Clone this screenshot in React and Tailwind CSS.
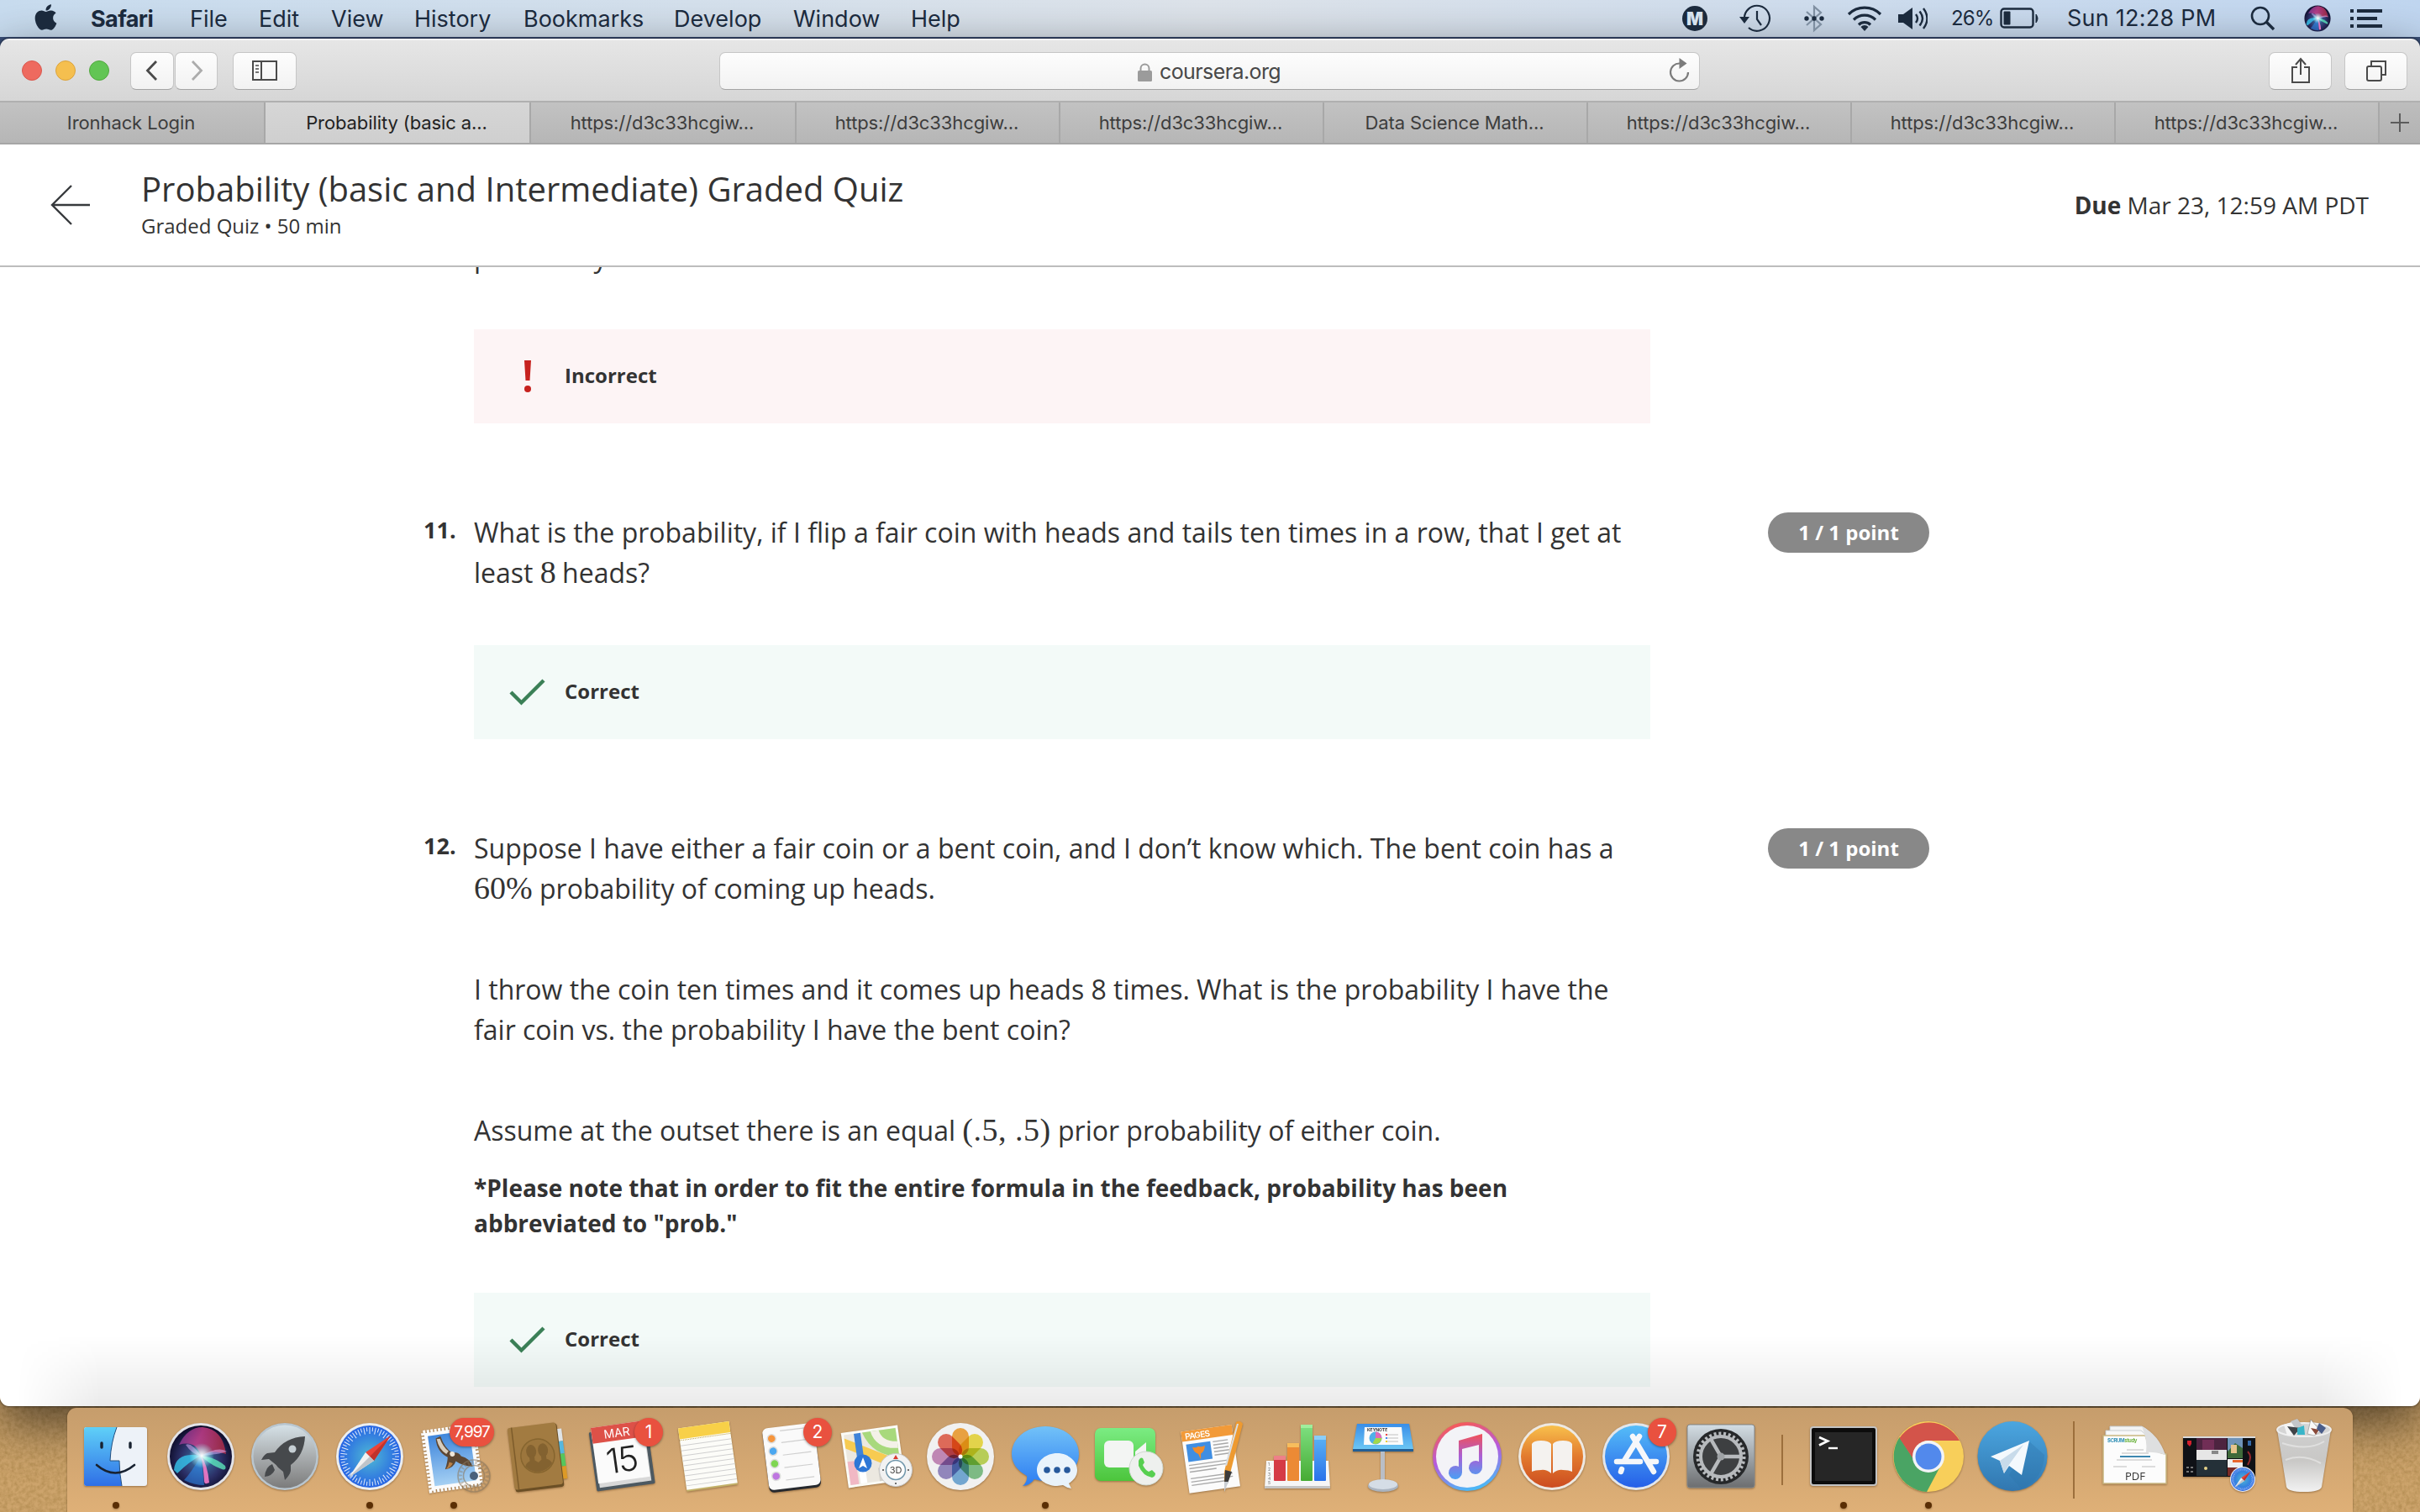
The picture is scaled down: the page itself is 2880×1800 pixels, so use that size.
import React from "react";
import { FaApple } from "react-icons/fa";

const INK = "#1b2a3d";

/* ---------- Menu bar ---------- */

const menus = [
  ["Safari", "w-[118px] font-bold tracking-[-0.6px]"],
  ["File", "w-[82px]"],
  ["Edit", "w-[86px]"],
  ["View", "w-[99px]"],
  ["History", "w-[130px]"],
  ["Bookmarks", "w-[179px]"],
  ["Develop", "w-[142px]"],
  ["Window", "w-[140px]"],
  ["Help", "w-[80px]"],
];

function MenuBar() {
  return (
    <div className="flex h-[44px] items-center bg-gradient-to-r from-[#c8dcef] via-[#dde3ea] to-[#c0d6f0] font-['Inter',sans-serif] text-[27px] text-[#1b2a3d]">
      <div className="w-[108px] pl-[37px] pb-[4px]">
        <FaApple size={35} />
      </div>
      {menus.map(([label, cls]) => (
        <div key={label} className={`whitespace-nowrap pt-px leading-[44px] ${cls}`}>
          {label}
        </div>
      ))}
      <div className="ml-auto flex h-[44px] items-center pr-[45px]">
        <div className="mr-[37px] flex size-[30px] items-center justify-center rounded-full bg-[#1b2a3d] text-[21px] font-black leading-none text-[#d5e1ee]">
          M
        </div>
        <svg className="mr-[38px]" width="40" height="34" viewBox="0 0 40 34" fill="none" stroke={INK} strokeWidth="2.2">
          <path d="M7 18A15 15 0 1 1 12 28" />
          <path d="M22 8v10l5 7" />
          <path d="M1 15h12l-6 8z" fill={INK} stroke="none" />
        </svg>
        <svg className="mr-[27px]" width="24" height="34" viewBox="0 0 24 34" fill="none" stroke="#7f8fa1" strokeWidth="2.2">
          <path d="M3 9l17 15-8 7V3l8 7L3 25" />
          <g fill={INK} stroke="none">
            <circle cx="3" cy="17" r="2.7" />
            <circle cx="12" cy="17" r="2.7" />
            <circle cx="21" cy="17" r="2.7" />
          </g>
        </svg>
        <svg className="mr-[19px]" width="42" height="32" viewBox="0 0 42 32" fill="none" stroke={INK} strokeWidth="3.2">
          <path d="M2 11a27 27 0 0 1 38 0" />
          <path d="M8 17.5a18.500 18.500 0 0 1 26 0" />
          <path d="M14 23.500a10 10 0 0 1 14 0" />
          <path d="M21 31l-4.500-5a6 6 0 0 1 9 0z" fill={INK} stroke="none" />
        </svg>
        <svg className="mr-[28px]" width="35" height="28" viewBox="0 0 35 28" fill="none" stroke={INK} strokeWidth="2.400">
          <path d="M0 9h6l11-8v26L6 19H0z" fill={INK} stroke="none" />
          <path d="M21 9q4 5 0 10M25.500 5.500q7 8.500 0 17M30 2q9 12 0 24" />
        </svg>
        <div className="w-[58px] text-[24px] tracking-[-0.9px]">26%</div>
        <svg className="mr-[33px]" width="47" height="26" viewBox="0 0 47 26" fill="none" stroke={INK} strokeWidth="2.400">
          <rect x="1.500" y="1.500" width="38" height="22" rx="3.500" />
          <path d="M43 8q4 5 0 10z" fill={INK} strokeWidth="1" />
          <rect x="4.500" y="4.500" width="8" height="16" rx="1" fill={INK} stroke="none" />
        </svg>
        <div className="w-[218px] whitespace-nowrap pt-px tracking-[0.25px]">Sun 12:28 PM</div>
        <svg className="mr-[33px]" width="31" height="30" viewBox="0 0 31 30" fill="none" stroke={INK} strokeWidth="2.600">
          <circle cx="12" cy="12" r="10" />
          <path d="M19 19l9 9" strokeWidth="3.400" />
        </svg>
        <svg className="mr-[23px]" width="32" height="32" viewBox="2 2 76 76">
          <SiriOrb />
        </svg>
        <svg width="38" height="22" viewBox="0 0 38 22" fill={INK}>
          <path d="M0 0h4v4H0zM8 0h30v4H8zM0 9h4v4H0zM8 9h24v4H8zM0 18h4v4H0zM8 18h30v4H8z" />
        </svg>
      </div>
    </div>
  );
}

/* ---------- Safari chrome ---------- */

function ToolButton({ className, children }) {
  return (
    <div
      className={`flex h-[45px] items-center justify-center rounded-[7px] border border-[#c6c6c6] border-b-[#a4a4a4] bg-gradient-to-b from-[#fdfdfd] to-[#f2f2f2] ${className}`}
    >
      {children}
    </div>
  );
}

function Toolbar() {
  return (
    <div className="flex h-[74px] items-center border-t-2 border-[#f4f4f4] bg-gradient-to-b from-[#e6e6e6] to-[#d6d6d6] pl-[26px] pr-[15px]">
      <div className="flex gap-[16px]">
        <div className="size-[24px] rounded-full border border-[#d9584e] bg-[#ee6a5f]" />
        <div className="size-[24px] rounded-full border border-[#dba33c] bg-[#f5bf4f]" />
        <div className="size-[24px] rounded-full border border-[#52a83f] bg-[#62c554]" />
      </div>
      <ToolButton className="ml-[25px] w-[52px]">
        <svg width="16" height="26" viewBox="0 0 16 26" fill="none" stroke="#4a4a4a" strokeWidth="2.800">
          <path d="M13 2L2.500 13 13 24" />
        </svg>
      </ToolButton>
      <ToolButton className="ml-px w-[51px]">
        <svg width="16" height="26" viewBox="0 0 16 26" fill="none" stroke="#acacac" strokeWidth="2.800">
          <path d="M3 2l10.500 11L3 24" />
        </svg>
      </ToolButton>
      <ToolButton className="ml-[18px] w-[76px]">
        <svg width="30" height="24" viewBox="0 0 30 24" fill="none" stroke="#4a4a4a" strokeWidth="2">
          <rect x="1" y="1" width="28" height="22" />
          <path d="M11 1v22" />
          <path d="M4 6h4M4 10h4M4 14h4" strokeWidth="1.600" />
        </svg>
      </ToolButton>
      <div className="ml-[503px] flex h-[45px] w-[1167px] items-center rounded-[7px] border border-[#c6c6c6] border-b-[#a4a4a4] bg-gradient-to-b from-[#fdfdfd] to-[#f2f2f2] pl-[497px] pr-[10px]">
        <svg className="mt-[3px]" width="17" height="22" viewBox="0 0 17 22">
          <rect y="9" width="17" height="13" rx="1.500" fill="#9b9b9b" />
          <path d="M3.500 10V6.500a5 5 0 0 1 10 0V10" fill="none" stroke="#9b9b9b" strokeWidth="2" />
        </svg>
        <span className="ml-[9px] mt-[4px] font-['Inter',sans-serif] text-[25px] tracking-[-0.6px] text-[#484848]">coursera.org</span>
        <svg className="ml-auto" width="28" height="30" viewBox="0 0 28 30" fill="none" stroke="#7b7b7b" strokeWidth="2.200">
          <path d="M15 6.500A10.500 10.500 0 1 0 25 17" />
          <path d="M14.500 0l9 6.500-9 6.500z" fill="#7b7b7b" stroke="none" />
        </svg>
      </div>
      <ToolButton className="ml-auto w-[75px]">
        <svg width="24" height="32" viewBox="0 0 24 32" fill="none" stroke="#4a4a4a" strokeWidth="2">
          <path d="M8 12H2v18h20V12h-6" />
          <path d="M12 21V3M6 9l6-7 6 7" />
        </svg>
      </ToolButton>
      <ToolButton className="ml-[15px] w-[75px]">
        <svg width="26" height="26" viewBox="0 0 26 26" fill="none" stroke="#4a4a4a" strokeWidth="2">
          <rect x="2" y="8" width="17" height="17" rx="2" />
          <path d="M7 7.500V2h17v16h-5" />
        </svg>
      </ToolButton>
    </div>
  );
}

const D3 = "https://d3c33hcgiw...";
const tabs = [
  ["Ironhack Login", "w-[316px]"],
  ["Probability (basic a...", "w-[316px]"],
  [D3, "w-[316px]"],
  [D3, "w-[314px]"],
  [D3, "w-[314px]"],
  ["Data Science Math...", "w-[314px]"],
  [D3, "w-[314px]"],
  [D3, "w-[314px]"],
  [D3, "w-[314px]"],
];

function TabBar() {
  return (
    <div className="flex h-[52px] border-b-2 border-t-2 border-[#a6a6a6] border-t-[#b0b0b0] font-['Inter',sans-serif] text-[22px]">
      {tabs.map(([label, cls], i) => (
        <div
          key={i}
          className={`flex shrink-0 items-center justify-center whitespace-nowrap border-r-2 border-[#a8a8a8] pr-[2px] tracking-[-0.1px] ${cls} ${
            i === 1
              ? "bg-gradient-to-b from-[#d6d6d6] to-[#cfcfcf] text-[#222]"
              : "bg-gradient-to-b from-[#c2c2c2] to-[#b6b6b6] text-[#3d3d3d]"
          }`}
        >
          {label}
        </div>
      ))}
      <div className="flex flex-1 items-center justify-center bg-gradient-to-b from-[#bdbdbd] to-[#b2b2b2]">
        <svg width="22" height="22" viewBox="0 0 22 22" stroke="#5c5c5c" strokeWidth="2">
          <path d="M11 0v22M0 11h22" />
        </svg>
      </div>
    </div>
  );
}

/* ---------- Quiz page ---------- */

function QuizHeader() {
  return (
    <div className="flex h-[146px] items-center border-b-2 border-[#bdbdbd] bg-white pl-[60px] pr-[61px] text-[#333]">
      <svg width="48" height="48" viewBox="0 0 48 48" fill="none" stroke="#373a3d" strokeWidth="2.400">
        <path d="M25 1L2 24l23 23M2 24h45" />
      </svg>
      <div className="-mt-px ml-[60px]">
        <div className="text-[40px] leading-[48px]">Probability (basic and Intermediate) Graded Quiz</div>
        <div className="mt-[2px] text-[24px] leading-[36px]">Graded Quiz • 50 min</div>
      </div>
      <div className="-mt-px ml-auto text-[28px]">
        <b>Due</b> Mar 23, 12:59 AM PDT
      </div>
    </div>
  );
}

function Feedback({ ok }) {
  return (
    <div className={`flex h-[112px] w-[1400px] items-center pl-[40px] ${ok ? "bg-[#f3faf8]" : "bg-[#fdf4f5]"}`}>
      <div className="flex w-[68px] pl-[2px]">
        {ok ? (
          <svg width="44" height="34" viewBox="0 0 44 34" fill="none" stroke="#3b8057" strokeWidth="4.400">
            <path d="M2 17l12.500 12.500L41 3" />
          </svg>
        ) : (
          <svg className="ml-[17px]" width="10" height="40" viewBox="0 0 10 40" fill="#c7221f">
            <path d="M1 1h8L7.500 25h-5z" />
            <circle cx="5" cy="35" r="4" />
          </svg>
        )}
      </div>
      <b className="-mt-[2px] text-[24px] leading-[36px]">{ok ? "Correct" : "Incorrect"}</b>
    </div>
  );
}

function Question({ number, children }) {
  return (
    <div className="mt-[104px] flex">
      <div className="w-[60px] pt-[2px] text-[27px] font-bold leading-[42px]">{number}.</div>
      <div className="w-[1400px] pt-[2px]">
        {children}
        <div className="h-[62px]" />
        <Feedback ok />
      </div>
      <div className="ml-[140px] mt-[2px] flex h-[48px] w-[192px] items-center justify-center rounded-full bg-[#888] pb-px text-[24px] font-bold text-white">
        1 / 1 point
      </div>
    </div>
  );
}

function MathText({ className = "", children }) {
  return <span className={`font-['Liberation_Serif',serif] text-[38px] leading-none ${className}`}>{children}</span>;
}

function QuizBody() {
  return (
    <div className="relative h-[1356px] overflow-hidden bg-white pl-[504px] text-[32px] leading-[48px] text-[#333]">
      <div className="-mt-[36px] ml-[60px] h-[48px] tracking-[-0.2px]">probability that is chosen.</div>
      <div className="ml-[60px] mt-[62px]">
        <Feedback />
      </div>
      <Question number="11">
        <p className="h-[96px]">
          What is the probability, if I flip a fair coin with heads and tails ten times in a row, that I get at
          <br />
          least <MathText className="tracking-[-1px]">8</MathText> heads?
        </p>
      </Question>
      <Question number="12">
        <p className="h-[96px]">
          Suppose I have either a fair coin or a bent coin, and I don’t know which. The bent coin has a
          <br />
          <MathText>60%</MathText> probability of coming up heads.
        </p>
        <p className="mt-[72px] h-[96px]">
          I throw the coin ten times and it comes up heads 8 times. What is the probability I have the
          <br />
          fair coin vs. the probability I have the bent coin?
        </p>
        <p className="mt-[72px] h-[48px]">
          Assume at the outset there is an equal <MathText className="tracking-[0.500px]">(.5, .5)</MathText> prior probability of either coin.
        </p>
        <p className="mt-[23px] text-[28px] font-bold leading-[42px]">
          *Please note that in order to fit the entire formula in the feedback, probability has been
          <br />
          abbreviated to "prob."
        </p>
      </Question>
      <div className="absolute bottom-0 left-[20px] right-[20px] h-[84px] bg-gradient-to-b from-transparent to-black/8 [mask-image:linear-gradient(to_right,transparent,black_100px,black_calc(100%-100px),transparent)]" />
    </div>
  );
}

/* ---------- Dock icons, each on a 100 x 124 cell centred at (50, 58) ---------- */

function SiriOrb() {
  return (
    <g>
      <defs>
        <radialGradient id="siriBase" cx=".5" cy=".55" r=".55">
          <stop offset="0" stopColor="#3d7fb0" />
          <stop offset=".6" stopColor="#2b2f66" />
          <stop offset="1" stopColor="#0c0a26" />
        </radialGradient>
        <linearGradient id="siriTop" x2="1" y2=".3">
          <stop offset="0" stopColor="#7a3ba0" />
          <stop offset=".5" stopColor="#d8408f" />
          <stop offset="1" stopColor="#c02f4a" />
        </linearGradient>
        <radialGradient id="siriGlow">
          <stop offset="0" stopColor="#fff" />
          <stop offset=".35" stopColor="#dff" stopOpacity=".7" />
          <stop offset="1" stopColor="#8ff" stopOpacity="0" />
        </radialGradient>
      </defs>
      <circle cx="40" cy="40" r="37" fill="url(#siriBase)" />
      <path d="M14 26Q24 5 42 5q24 2 28 32-14-6-30 2Q34 20 14 26z" fill="url(#siriTop)" opacity=".75" />
      <path d="M8 56Q10 34 40 39 26 46 12 60z" fill="#36c5ee" opacity=".8" />
      <path d="M40 39q18 2 29 12 2 6-4 4-14-5-25-16z" fill="#5ff0c0" opacity=".75" />
      <path d="M40 39q8 10 10 32-6 3-6-2-1-18-4-30z" fill="#f47ac8" opacity=".9" />
      <path d="M40 39Q28 60 20 68q12 6 24 6-2-20-4-35z" fill="#2d8df0" opacity=".55" />
      <path d="M40 39Q28 22 22 26q8 12 18 13zM40 39q22-12 31-5-12 4-31 5z" fill="#e6b4ff" opacity=".5" />
      <circle cx="41" cy="39" r="15" fill="url(#siriGlow)" />
    </g>
  );
}

function Compass({ cx = 50, cy = 58, r = 40 }) {
  const ticks = Array.from({ length: 60 }, (_, i) => i * 6);
  return (
    <g transform={`translate(${cx} ${cy}) scale(${r / 40})`}>
      <circle r="40" fill="#eceef0" />
      <circle r="37" fill="url(#compassFill)" />
      <g stroke="#fff" strokeWidth="1" opacity=".85">
        {ticks.map((a) => (
          <path key={a} d={a % 12 ? "M0-35v5" : "M0-35v8"} transform={`rotate(${a})`} />
        ))}
      </g>
      <path d="M25-25L5 5-5-5z" fill="#ea4438" />
      <path d="M25-25L5 5 0 0z" fill="#c0332b" />
      <path d="M-25 25L5 5-5-5z" fill="#f2f2f2" />
      <path d="M-25 25L5 5 0 0z" fill="#bfc4c9" />
    </g>
  );
}

const Finder = () => (
  <g>
    <rect x="12" y="23" width="75" height="70" rx="3" fill="#edf2f8" />
    <path d="M15 23h36q-7 18-8 40h11q0 14 3 30H15q-3 0-3-3V26q0-3 3-3z" fill="url(#finderBlue)" />
    <path d="M51 23q-7 18-8 40h11q0 14 3 30" fill="none" stroke="#23507f" strokeWidth="1" />
    <path d="M33 42v5M67 42v5" stroke="#182230" strokeWidth="3.400" strokeLinecap="round" />
    <path d="M27 68q22 19 45 0" stroke="#182230" strokeWidth="2.600" fill="none" strokeLinecap="round" />
  </g>
);

const Siri = () => (
  <g>
    <circle cx="50" cy="58" r="40" fill="#e4e4e8" />
    <g transform="translate(10 18)">
      <SiriOrb />
    </g>
  </g>
);

const Launchpad = () => (
  <g>
    <circle cx="50" cy="58" r="40" fill="#b9c6cf" />
    <circle cx="50" cy="58" r="37.500" fill="url(#rocketDisc)" />
    <path d="M74 34q-24 1-36 19l-9 1q-4 2-7 8l9-1 5 4q3 2 6 6l6 5 2 10q6-6 7-11l0-7q16-12 17-34z" fill="#46494c" />
    <path d="M35 67q-8 3-9 15 9-1 12-8z" fill="#46494c" />
    <circle cx="59" cy="49" r="4.500" fill="#c5ced3" />
  </g>
);

const Mail = () => (
  <g>
    <g transform="rotate(-8 48 60)">
      <rect x="18" y="25" width="60" height="70" fill="none" stroke="#fbfbfb" strokeWidth="5" strokeDasharray="3 1.500" />
      <rect x="19" y="26" width="58" height="68" fill="#fbfbfb" />
      <rect x="23" y="30" width="50" height="60" fill="url(#mailSky)" />
      <path d="M32 34l6-2q3 16 12 22 6-1 9 5 10 4 12 14-12-2-19-9-4 8-14 8 4-8 5-14-12-8-11-24z" fill="#5d4733" />
      <path d="M33 35l4 0q2 10 8 16l-3 3Q34 48 33 35z" fill="#d8cdbd" />
      <path d="M44 64l4 2q-3 5-9 6 4-4 5-8z" fill="#b98046" />
      <circle cx="49" cy="55" r="3" fill="#efe6d8" />
    </g>
    <g fill="none" stroke="#8c7b62" strokeWidth="1.600" opacity=".6">
      <circle cx="74" cy="81" r="19" />
      <circle cx="74" cy="81" r="12.500" />
      <circle cx="74" cy="81" r="16" strokeWidth="4" strokeDasharray="2 2.500" opacity=".7" />
    </g>
    <circle cx="74" cy="81" r="5" fill="#4a617c" />
  </g>
);

const Contacts = () => (
  <g transform="rotate(-7 50 58)">
    <path d="M74 28h7v15h-7z" fill="#dfe3e6" />
    <path d="M74 43h7v15h-7z" fill="#56b7de" />
    <path d="M74 58h7v15h-7z" fill="#56c65c" />
    <path d="M74 73h7v15h-7z" fill="#dd9a27" />
    <rect x="18" y="21" width="58" height="76" rx="3" fill="#6b4f25" />
    <rect x="17" y="20" width="58" height="74" rx="3" fill="#a27b41" />
    <path d="M22 20v74" stroke="#7d5c2b" strokeWidth="1.500" />
    <circle cx="49" cy="57" r="20" fill="#9c763d" stroke="#86652f" strokeWidth="1.500" />
    <ellipse cx="42" cy="51" rx="6" ry="8" fill="#836230" />
    <ellipse cx="56" cy="51" rx="6" ry="8" fill="#836230" />
    <path d="M33 68q1-4 6-6v-6h6v6l4 3 4-3v-6h6v6q5 2 6 6-7 8-16 8t-16-8z" fill="#836230" />
  </g>
);

const Calendar = () => (
  <g transform="rotate(-8 50 58)">
    <rect x="14" y="24" width="70" height="71" rx="2" fill="#4d5961" />
    <rect x="18" y="20" width="62" height="71" fill="#d8d8d8" />
    <rect x="17" y="19" width="62" height="67" fill="#fbfbfb" />
    <rect x="17" y="19" width="62" height="19" fill="#dd5148" />
    <text x="47" y="34" fontSize="14" textAnchor="middle" fill="#fff" fontFamily="Inter, sans-serif">MAR</text>
    <text x="48" y="76" fontSize="41" textAnchor="middle" fill="#222" fontFamily="Inter, sans-serif" fontWeight="300" letterSpacing="-2">15</text>
  </g>
);

const Notes = () => (
  <g transform="rotate(-8 50 58)">
    <rect x="20" y="20" width="61" height="76" fill="#c3b168" />
    <rect x="20" y="20" width="61" height="74" fill="#fcfcf8" />
    <rect x="20" y="20" width="61" height="13" fill="#f8d048" />
    <path d="M20 34.500h61" stroke="#b59b45" strokeDasharray="1 1" />
    {[41, 47, 53, 59, 65, 71, 77, 83, 89].map((y) => (
      <path key={y} d={`M20 ${y}h61`} stroke="#d0d0d0" />
    ))}
  </g>
);

const Reminders = () => (
  <g transform="rotate(-7 50 58)">
    <rect x="19" y="23" width="62" height="75" rx="6" fill="#26292e" />
    <rect x="19" y="21" width="62" height="74" rx="6" fill="#fafafa" />
    {["#f6953c", "#4ba7f0", "#7fd652", "#be76e0"].map((c, i) => (
      <g key={c}>
        <circle cx="29" cy={34 + i * 15} r="5" fill={c} stroke="#ddd" strokeWidth="1.500" />
        <path d={`M40 ${40 + i * 15}h34`} stroke="#cfcfcf" strokeWidth="1.200" />
      </g>
    ))}
    <path d="M40 26h34" stroke="#cfcfcf" strokeWidth="1.200" />
  </g>
);

const Maps = () => (
  <g>
    <g transform="rotate(-8 46 58)">
      <rect x="12" y="25" width="68" height="66" fill="#fbfbf6" />
      <rect x="15" y="28" width="62" height="60" fill="#ece8e0" />
      <path d="M37 28h40v34Q46 58 37 28z" fill="#a8d97c" />
      <path d="M47 28q4 22 30 24v-8q-18-2-20-16z" fill="#f4f1e8" />
      <path d="M15 44l62 36v-13L15 32z" fill="#f7cb51" />
      <path d="M15 60h10v28H15z" fill="#f1b8c4" />
      <path d="M27 28h8v34h-8z" fill="#3f83d8" />
      <path d="M27 62h8v26h-8z" fill="#fff" />
      <path d="M50 72l14 8v8H50z" fill="#d4d1ca" />
    </g>
    <circle cx="34" cy="66" r="10.500" fill="#2e77d6" />
    <path d="M34 59l5 13-5-3-5 3z" fill="#fff" />
    <circle cx="73" cy="74" r="19.500" fill="#f2f2f2" stroke="#c9c9c9" />
    <circle cx="73" cy="74" r="11.500" fill="#fff" stroke="#7096ab" strokeWidth="1.500" />
    <path d="M73 56l3 5h-6z" fill="#d93a2e" />
    <path d="M57 74h2M87 74h2M73 89v2" stroke="#444" strokeWidth="1.500" />
    <text x="73" y="78" fontSize="11" textAnchor="middle" fill="#444" fontFamily="Inter, sans-serif">3D</text>
  </g>
);

const Photos = () => (
  <g>
    <circle cx="50" cy="58" r="40" fill="#f1f1f1" />
    {["#f5a130", "#f0dd3c", "#bcd54a", "#77bf80", "#6ba7d8", "#8f82c0", "#c583b8", "#e8604c"].map((c, i) => (
      <rect
        key={c}
        x="40"
        y="24"
        width="20"
        height="33"
        rx="10"
        fill={c}
        className="mix-blend-multiply"
        opacity=".9"
        transform={`rotate(${i * 45} 50 58)`}
      />
    ))}
    <circle cx="50" cy="58" r="2.500" fill="#fff" />
  </g>
);

const Messages = () => (
  <g>
    <path d="M50 22c22 0 40 14 40 33S72 87 50 87q-7 0-13-2-5 7-14 8 6-5 5-12C17 75 10 66 10 55c0-19 18-33 40-33z" fill="url(#msgBlue)" />
    <path d="M64 54c13 0 24 9 24 20 0 7-4 12-10 16l3 6q-6-1-10-4l-7 1c-13 0-24-8-24-19s11-20 24-20z" fill="#e9f3fb" />
    <g fill="#27599c">
      <circle cx="52" cy="74" r="3.800" />
      <circle cx="64" cy="74" r="3.800" />
      <circle cx="76" cy="74" r="3.800" />
    </g>
  </g>
);

const FaceTime = () => (
  <g>
    <rect x="9" y="24" width="72" height="63" rx="7" fill="url(#ftGreen)" />
    <rect x="20" y="39" width="35" height="32" rx="6" fill="#f3f5f3" />
    <path d="M57 52l13-11v28L57 60z" fill="#f3f5f3" />
    <circle cx="70" cy="72" r="20" fill="#eef0ee" stroke="#cfd8cf" />
    <path d="M61 63q2-5 5-3l2 5-2 3q2 5 7 8l4-2 4 4q0 4-4 5-11-2-16-14z" fill="#57cf50" />
  </g>
);

const Pages = () => (
  <g>
    <g transform="rotate(-8 45 60)">
      <rect x="15" y="24" width="61" height="74" fill="#fbfbfb" />
      <rect x="15" y="24" width="61" height="12" fill="#f29a38" />
      <text x="19" y="34" fontSize="10" fill="#fff" fontFamily="Inter, sans-serif" fontWeight="600" letterSpacing="-0.600">PAGES</text>
      <rect x="19" y="40" width="29" height="21" fill="#3f8ee2" />
      <path d="M26 44q4 2 7 0 4 2 8 0-1 7-6 9l-1 7-2-7q-5-2-6-9z" fill="#f08c2a" />
      <path d="M51 41h18M51 45h18M51 49h18M51 53h18M51 57h18M19 65h50M19 69h50M19 73h32M19 81h50M19 85h50M19 89h40" stroke="#a9a9a9" strokeWidth="1.400" />
    </g>
    <path d="M76 17q5-3 8 2L69 78l-6 18-1-1 0-19z" fill="#ee9a30" />
    <path d="M77 19l2 0-14 50-2-1z" fill="#d8dde2" />
    <path d="M63 74l8 2-5 14-4 0z" fill="#3b3b3b" />
    <path d="M62 88h5l-5 12z" fill="#c9ced3" />
  </g>
);

const Numbers = () => (
  <g>
    <path d="M12 63h74l2 32H10z" fill="#f6f6f6" />
    <path d="M10 93h78v3H10z" fill="#c5c5c5" />
    <g fontSize="5" fill="#777" fontFamily="Inter, sans-serif">
      <text x="14" y="69">1</text>
      <text x="14" y="75">2</text>
      <text x="14" y="81">3</text>
      <text x="14" y="86">4</text>
      <text x="14" y="91">5</text>
    </g>
    <rect x="21" y="57" width="14" height="30" rx="1" fill="#d53b46" />
    <rect x="21" y="57" width="14" height="5" fill="#ee8088" />
    <rect x="37" y="42" width="14" height="45" rx="1" fill="#ec8a35" />
    <rect x="37" y="42" width="14" height="5" fill="#f7bd5d" />
    <rect x="53" y="20" width="14" height="67" rx="1" fill="url(#barGreen)" />
    <rect x="53" y="20" width="14" height="4" fill="#a0ee9c" />
    <rect x="69" y="33" width="14" height="54" rx="1" fill="url(#barBlue)" />
    <rect x="69" y="33" width="14" height="5" fill="#8bcdf7" />
  </g>
);

const Keynote = () => (
  <g>
    <path d="M47 50h5v42h-5z" fill="#b9bec6" />
    <ellipse cx="50" cy="93" rx="18" ry="7" fill="#aab4c0" />
    <ellipse cx="50" cy="91" rx="17" ry="6" fill="#d5dde6" />
    <path d="M19 19h62l5 30H14z" fill="url(#knBlue)" />
    <path d="M14 49h72v3H14z" fill="#235e94" />
    <path d="M28 23h44l2 21H27z" fill="#fbfbfb" />
    <text x="31" y="28" fontSize="5" fill="#333" fontWeight="700" fontFamily="Inter, sans-serif">KEYNOTE</text>
    <circle cx="41" cy="36" r="7.500" fill="#51b0e8" />
    <path d="M41 36v-7.500a7.500 7.500 0 0 1 7.500 7.500z" fill="#e06bb8" />
    <path d="M41 36h7.500a7.500 7.500 0 0 1-11 6z" fill="#a3d84a" />
    <path d="M54 32h14M54 36h14M54 40h14" stroke="#c0c0c0" />
    <path d="M53 32h2" stroke="#e44" strokeWidth="2" />
    <path d="M53 36h2" stroke="#48e" strokeWidth="2" />
    <path d="M53 40h2" stroke="#ec3" strokeWidth="2" />
  </g>
);

const ITunes = () => (
  <g>
    <circle cx="50" cy="58" r="41" fill="url(#itRing)" />
    <circle cx="50" cy="58" r="37" fill="#f3f3f7" />
    <path d="M40 39l28-8v40a8 8 0 1 1-4-7V44l-20 5v28a8 8 0 1 1-4-7z" fill="url(#itNote)" />
  </g>
);

const Books = () => (
  <g>
    <circle cx="50" cy="58" r="40" fill="#eee9e2" />
    <circle cx="50" cy="58" r="37" fill="url(#bookOrange)" />
    <path d="M26 43q2-4 11-4 9 0 12 4v35q-6-5-12-4-7 0-11 2zM74 43q-2-4-11-4-9 0-12 4v35q6-5 12-4 7 0 11 2z" fill="#f4f2ef" />
  </g>
);

const AppStore = () => (
  <g>
    <circle cx="50" cy="58" r="40" fill="#e3e6ea" />
    <circle cx="50" cy="58" r="37" fill="url(#asBlue)" />
    <g stroke="#f5f7fa" strokeWidth="6.500" strokeLinecap="round" fill="none">
      <path d="M54 34L36 63M46 34l25 42M27 64h28M67 64h7M33 73l-1 3" />
    </g>
  </g>
);

const Prefs = () => (
  <g>
    <rect x="10" y="20" width="80" height="75" rx="3" fill="url(#prefBg)" stroke="#83888c" />
    <circle cx="50" cy="58" r="33" fill="#26282a" />
    <circle cx="50" cy="58" r="24" fill="#3d3f41" stroke="#b7babd" strokeWidth="4" />
    <circle cx="50" cy="58" r="27.500" fill="none" stroke="#b7babd" strokeWidth="4" strokeDasharray="3 2.759" />
    <path d="M50 58h23M50 58L38.500 38M50 58L38.500 78" stroke="#b7babd" strokeWidth="4.500" />
    <circle cx="50" cy="58" r="4.500" fill="#9fa3a6" />
  </g>
);

const Terminal = () => (
  <g>
    <rect x="11" y="23" width="78" height="69" rx="3" fill="#0c0c0c" stroke="#c3c3c3" strokeWidth="2" />
    <rect x="16" y="29" width="68" height="58" fill="#262626" />
    <path d="M21 35l10 4.500-10 5" stroke="#fff" strokeWidth="2.800" fill="none" />
    <path d="M32 48h11" stroke="#fff" strokeWidth="2.400" />
  </g>
);

const Chrome = () => (
  <g>
    <circle cx="50" cy="58" r="42" fill="#f8cf5a" />
    <path d="M15.500 35A42 42 0 0 0 48 100L66 66 50 58 33 62z" fill="#4aa464" />
    <path d="M15.500 36A42 42 0 0 1 87 39H50a19 19 0 0 0-18 22z" fill="#d3544a" />
    <circle cx="50" cy="58" r="19" fill="#f3f4f6" />
    <circle cx="50" cy="58" r="15.500" fill="#5289ec" />
  </g>
);

const Telegram = () => (
  <g>
    <circle cx="50" cy="57.500" r="41.500" fill="url(#tgBlue)" />
    <path d="M70 40l18 16q-1 30-28 40L46 80z" fill="#2f75ab" opacity=".35" />
    <path d="M24 58l46-19-9 41-15-11-6 9-5-15z" fill="#f4f9fd" />
    <path d="M35 63l28-19-18 25-5 9z" fill="#c8dbea" />
  </g>
);

const PdfStack = () => (
  <g>
    <path d="M20 22h38q14 6 18 32v20H20z" fill="#f4f4f4" stroke="#c9cfd2" />
    <path d="M15 27h42q12 8 17 30v20H15z" fill="#f8f8f8" stroke="#c9cfd2" />
    <path d="M12 33h50q6 20 25 22v35H12z" fill="#fcfcfc" stroke="#c9b680" strokeWidth="1.500" />
    <path d="M58 22q20 10 28 34-14-4-23-3 2-14-5-31z" fill="#dedfe0" />
    <text x="17" y="41" fontSize="6" fontWeight="700" fill="#2f8fb5" fontFamily="Inter, sans-serif" letterSpacing="-0.400">SCRUM<tspan fill="#6eb440">study</tspan></text>
    <path d="M40 50h20M34 54h32M28 62h42M24 70h16M58 70h16" stroke="#bcbcbc" />
    <path d="M32 58h36" stroke="#3d87b0" strokeWidth="1.800" />
    <text x="50" y="86" fontSize="13" textAnchor="middle" fill="#333" fontFamily="Open Sans, sans-serif">PDF</text>
  </g>
);

const WindowThumb = () => (
  <g>
    <rect x="7" y="34" width="86" height="48" fill="#0f1116" />
    <rect x="7" y="34" width="86" height="2" fill="#d9dbdd" />
    <rect x="23" y="36" width="36" height="14" fill="#4d2440" />
    <rect x="30" y="38" width="14" height="12" fill="#8a3566" opacity=".6" />
    <rect x="23" y="50" width="36" height="12" fill="#e6e6e6" />
    <rect x="41" y="51" width="8" height="4" fill="#888" />
    <rect x="23" y="62" width="36" height="19" fill="#243038" />
    <circle cx="34" cy="72" r="2" fill="#e6d38a" />
    <rect x="60" y="36" width="18" height="24" fill="#6f93b8" />
    <path d="M60 52l9-10 9 6v12H60z" fill="#3f6a3a" />
    <rect x="64" y="44" width="7" height="10" fill="#e6c48c" />
    <rect x="60" y="61" width="18" height="10" fill="#eee" />
    <rect x="66" y="62" width="12" height="3" fill="#e8652c" />
    <rect x="60" y="71" width="18" height="10" fill="#7a2a26" />
    <path d="M12 39h5v4l-2 3-3-3z" fill="#d3202e" />
    <path d="M84 39h4v6h-4z" fill="#3469a8" />
    <path d="M84 52q6 6 0 16" stroke="#97282d" fill="none" strokeWidth="2" />
    <path d="M11 71h3M16 71h3M11 76h3M16 76h3" stroke="#777" strokeWidth="2" />
    <Compass cx={78} cy={85} r={15} />
  </g>
);

const Trash = () => (
  <g>
    <path d="M18 26L29 94q2 6 21 6t21-6L82 26z" fill="url(#trashBody)" />
    <ellipse cx="50" cy="26" rx="32" ry="8" fill="#d5d5d5" stroke="#efefef" strokeWidth="2" />
    <path d="M26 20l12-4 6 14-14 3z" fill="#f4f4f4" />
    <path d="M34 16l8-3 6 8-8 4z" fill="#c3c6c9" />
    <path d="M30 22l16 2-8 9z" fill="#404448" />
    <path d="M42 24l8-3 1 11h-9z" fill="#39b5c9" />
    <path d="M54 31l4-17 12 14-8 5z" fill="#fafafa" stroke="#888" strokeWidth=".6" />
    <path d="M58 24l10 2-4 6z" fill="#8a4a3a" />
    <path d="M68 18l8 6-5 7-6-6z" fill="#4a5d8a" />
    <path d="M24 42q30 10 50-2M28 62q20-8 42 4" stroke="#fff" strokeWidth="2" fill="none" opacity=".4" />
  </g>
);

function Grad({ id, stops }) {
  return (
    <linearGradient id={id} x1="0" y1="0" x2="0" y2="1">
      {stops.map((c, i) => (
        <stop key={i} offset={i / (stops.length - 1)} stopColor={c} />
      ))}
    </linearGradient>
  );
}

function DockGradients() {
  return (
    <svg className="absolute size-0">
      <defs>
        <Grad id="finderBlue" stops={["#5fd0f8", "#2f6fe6"]} />
        <Grad id="rocketDisc" stops={["#d5e1e7", "#a9adaf", "#7c7c7c"]} />
        <Grad id="mailSky" stops={["#3f86dc", "#a5d0f3"]} />
        <Grad id="msgBlue" stops={["#72c2f8", "#2c7cf2"]} />
        <Grad id="ftGreen" stops={["#7bec83", "#4cc53c"]} />
        <Grad id="barGreen" stops={["#7fe082", "#46ab33"]} />
        <Grad id="barBlue" stops={["#5cb4f4", "#2a72ea"]} />
        <Grad id="knBlue" stops={["#3a8ee8", "#6cc6f4"]} />
        <Grad id="bookOrange" stops={["#f8c04c", "#e27a2e", "#cc4c20"]} />
        <Grad id="asBlue" stops={["#55bdf8", "#255fe8"]} />
        <Grad id="prefBg" stops={["#d3dde4", "#6c6e70"]} />
        <Grad id="tgBlue" stops={["#4ba6e0", "#3177b0"]} />
        <Grad id="trashBody" stops={["#cfcfcf", "#c9c8c6", "#f2f2f2"]} />
        <Grad id="itNote" stops={["#f25056", "#a95fd6", "#4aa0f4"]} />
        <linearGradient id="itRing" x1=".3" y1="0" x2=".6" y2="1">
          <stop offset="0" stopColor="#fb5a50" />
          <stop offset=".5" stopColor="#b45be0" />
          <stop offset="1" stopColor="#45bdf8" />
        </linearGradient>
        <radialGradient id="compassFill">
          <stop offset="0" stopColor="#4fb9d4" />
          <stop offset="1" stopColor="#2765e4" />
        </radialGradient>
      </defs>
    </svg>
  );
}

const apps = [
  { icon: Finder, open: true },
  { icon: Siri },
  { icon: Launchpad },
  { icon: Compass, open: true },
  { icon: Mail, open: true, badge: "7,997" },
  { icon: Contacts },
  { icon: Calendar, badge: "1" },
  { icon: Notes },
  { icon: Reminders, badge: "2" },
  { icon: Maps },
  { icon: Photos },
  { icon: Messages, open: true },
  { icon: FaceTime },
  { icon: Pages },
  { icon: Numbers },
  { icon: Keynote },
  { icon: ITunes },
  { icon: Books },
  { icon: AppStore, badge: "7" },
  { icon: Prefs },
];
const extraApps = [{ icon: Terminal, open: true }, { icon: Chrome, open: true }, { icon: Telegram }];
const stacks = [{ icon: PdfStack }, { icon: WindowThumb }, { icon: Trash }];

function DockItem({ item }) {
  const Icon = item.icon;
  return (
    <div className="relative h-[124px] w-[100.500px] shrink-0">
      <svg width="100" height="124" viewBox="0 0 100 124" className="drop-shadow-[0_1px_1px_rgba(60,30,0,0.4)]">
        <Icon />
        {item.open && <circle cx="50" cy="116" r="4" fill="#5a2e04" />}
      </svg>
      {item.badge && (
        <div
          className={`absolute top-[12px] flex h-[34px] items-center justify-center rounded-full bg-[#e9513f] font-['Inter',sans-serif] text-white shadow-[0_1px_3px_rgba(0,0,0,0.4)] ${
            item.badge.length > 1 ? "left-[45px] w-[53px] text-[19px] tracking-[-1px]" : "left-[64px] w-[34px] text-[21px]"
          }`}
        >
          {item.badge}
        </div>
      )}
    </div>
  );
}

function Dock() {
  return (
    <div className="relative mx-[80px] mt-[2px] flex h-[124px] rounded-t-[11px] bg-gradient-to-b from-[#c69d6c] to-[#dfb077] pl-[8px] shadow-[0_0_2px_rgba(60,35,10,0.6)]">
      <DockGradients />
      {apps.map((a, i) => (
        <DockItem key={i} item={a} />
      ))}
      <div className="flex w-[46px] shrink-0 justify-center pt-[32px]">
        <div className="h-[60px] w-[2px] bg-[#9c6f3c]" />
      </div>
      {extraApps.map((a, i) => (
        <DockItem key={i} item={a} />
      ))}
      <div className="flex w-[45px] shrink-0 justify-center pt-[16px]">
        <div className="h-[92px] w-[2px] bg-[#9c6f3c]" />
      </div>
      {stacks.map((a, i) => (
        <DockItem key={i} item={a} />
      ))}
    </div>
  );
}

function Sand() {
  return (
    <svg className="absolute bottom-0 left-0" width="2880" height="140">
      <filter id="sand">
        <feTurbulence type="fractalNoise" baseFrequency=".22" numOctaves="3" seed="4" />
        <feColorMatrix values="0 0 0 0 .35  0 0 0 0 .2  0 0 0 0 .05  .9 0 0 0 -.28" />
      </filter>
      <rect width="2880" height="140" fill="#cda46c" />
      <rect width="2880" height="140" filter="url(#sand)" />
    </svg>
  );
}

export default function App() {
  return (
    <div className="relative h-[1800px] w-[2880px] overflow-hidden bg-[#3a4f78] font-['Open_Sans',sans-serif]">
      <Sand />
      <div className="relative">
        <MenuBar />
        <div className="mt-[2px] overflow-hidden rounded-[11px] shadow-[0_20px_60px_rgba(0,0,0,0.6),0_0_3px_rgba(0,0,0,0.8)]">
          <Toolbar />
          <TabBar />
          <QuizHeader />
          <QuizBody />
        </div>
        <Dock />
      </div>
    </div>
  );
}
